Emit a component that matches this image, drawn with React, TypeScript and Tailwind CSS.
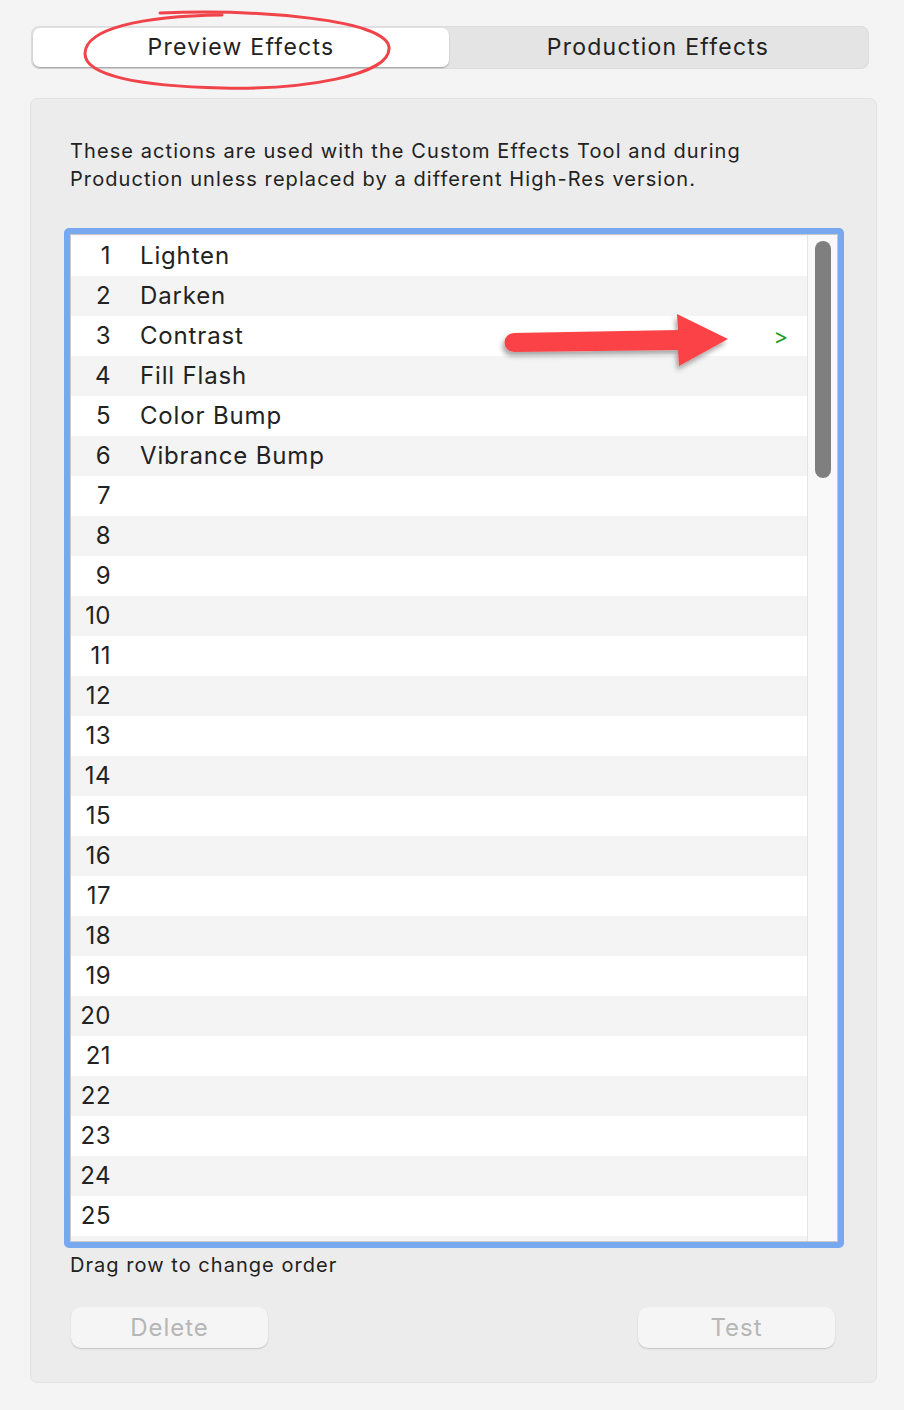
import React from "react";

const effects = ["Lighten", "Darken", "Contrast", "Fill Flash", "Color Bump", "Vibrance Bump"];

const rows = Array.from({ length: 25 }, (_, i) => ({
  n: i + 1,
  name: effects[i] ?? "",
}));

const font = { fontFamily: "Inter, 'Noto Sans', sans-serif" };

const Ellipse = () => (
  <svg className="absolute left-0 top-0 pointer-events-none" width="420" height="100" viewBox="0 0 420 100">
    <path
      d="M 160 13 C 262 9, 386 20, 389 47 C 392 76, 300 90, 222 88 C 140 86, 84 76, 85 53 C 86 29, 140 16, 222 15"
      fill="none"
      stroke="#f0434a"
      strokeWidth="3"
      strokeLinecap="round"
    />
  </svg>
);

const Arrow = () => (
  <svg className="absolute pointer-events-none" style={{ left: 498, top: 307 }} width="240" height="70" viewBox="0 0 240 70">
    <defs>
      <filter id="sh" x="-10%" y="-30%" width="130%" height="170%">
        <feDropShadow dx="-2" dy="4" stdDeviation="2.5" floodColor="#000" floodOpacity="0.35" />
      </filter>
    </defs>
    <g filter="url(#sh)">
      <path
        d="M 16 26 L 180 23 L 179 7 L 230 32 L 181 59 L 180 43 L 16 45 A 9.5 9.5 0 0 1 16 26 Z"
        fill="#fb4347"
      />
    </g>
  </svg>
);

export default function App() {
  return (
    <div className="relative w-[904px] h-[1410px] bg-[#f4f4f4] overflow-hidden" style={font}>
      {/* tabs */}
      <div className="pt-[26px] pl-[31px]">
        <div className="flex w-[838px] h-[43px] rounded-[8px] bg-[#e4e4e4] border border-[#dcdcdc] p-px">
          <div className="w-[416px] h-full rounded-[7px] bg-white shadow-[0_1px_1.5px_rgba(0,0,0,0.3)] flex items-center justify-center text-[23px] tracking-[0.055em] text-[#222]">
            Preview Effects
          </div>
          <div className="flex-1 flex items-center justify-center text-[23px] tracking-[0.055em] text-[#222]">
            Production Effects
          </div>
        </div>
      </div>
      <Ellipse />

      {/* panel */}
      <div className="ml-[30px] mt-[29px] w-[847px] h-[1285px] rounded-[7px] bg-[#ececec] border border-[#e2e2e2] px-[33px] pt-[38px]">
        <p className="ml-[6px] text-[20px] leading-[28px] tracking-[0.054em] text-[#222]">
          These actions are used with the Custom Effects Tool and during
          <br />
          Production unless replaced by a different High-Res version.
        </p>

        <div className="mt-[35px] w-[780px] h-[1020px] rounded-[5px] border-[6px] border-[#78a8ef]">
          <div className="flex h-full border border-[#c9c9c9] overflow-hidden bg-[#f4f4f4]">
            <div className="flex-1 pt-px">
              {rows.map((r) => (
                <div
                  key={r.n}
                  className={`flex items-center h-[40px] text-[24px] text-[#222] ${r.n % 2 === 1 ? "bg-white" : "bg-[#f4f4f4]"}`}
                >
                  <span className="w-[40px] text-right tracking-[0.02em]">{r.n}</span>
                  <span className="ml-[29px] flex-1 tracking-[0.035em]">{r.name}</span>
                  {r.n === 3 && <span className="mr-[19px] text-[22px] text-[#1a9e1a]">&gt;</span>}
                </div>
              ))}
            </div>
            <div className="w-[30px] bg-[#f9f9f9] border-l border-[#e4e4e4] pt-[6px] flex justify-center">
              <div className="w-[16px] h-[237px] rounded-full bg-[#7f7f7f]" />
            </div>
          </div>
        </div>

        <p className="ml-[6px] mt-[4px] text-[20px] leading-[26px] tracking-[0.052em] text-[#222]">Drag row to change order</p>

        <div className="mt-[29px] flex justify-between px-[7px] pr-[8px]">
          <button className="w-[197px] h-[41px] rounded-[10px] bg-[#f5f5f5] shadow-[0_1px_1.5px_rgba(0,0,0,0.18)] text-[24px] tracking-[0.04em] text-[#b6b6b6]">
            Delete
          </button>
          <button className="w-[197px] h-[41px] rounded-[10px] bg-[#f5f5f5] shadow-[0_1px_1.5px_rgba(0,0,0,0.18)] text-[24px] tracking-[0.04em] text-[#b6b6b6]">
            Test
          </button>
        </div>
      </div>

      <Arrow />
    </div>
  );
}
